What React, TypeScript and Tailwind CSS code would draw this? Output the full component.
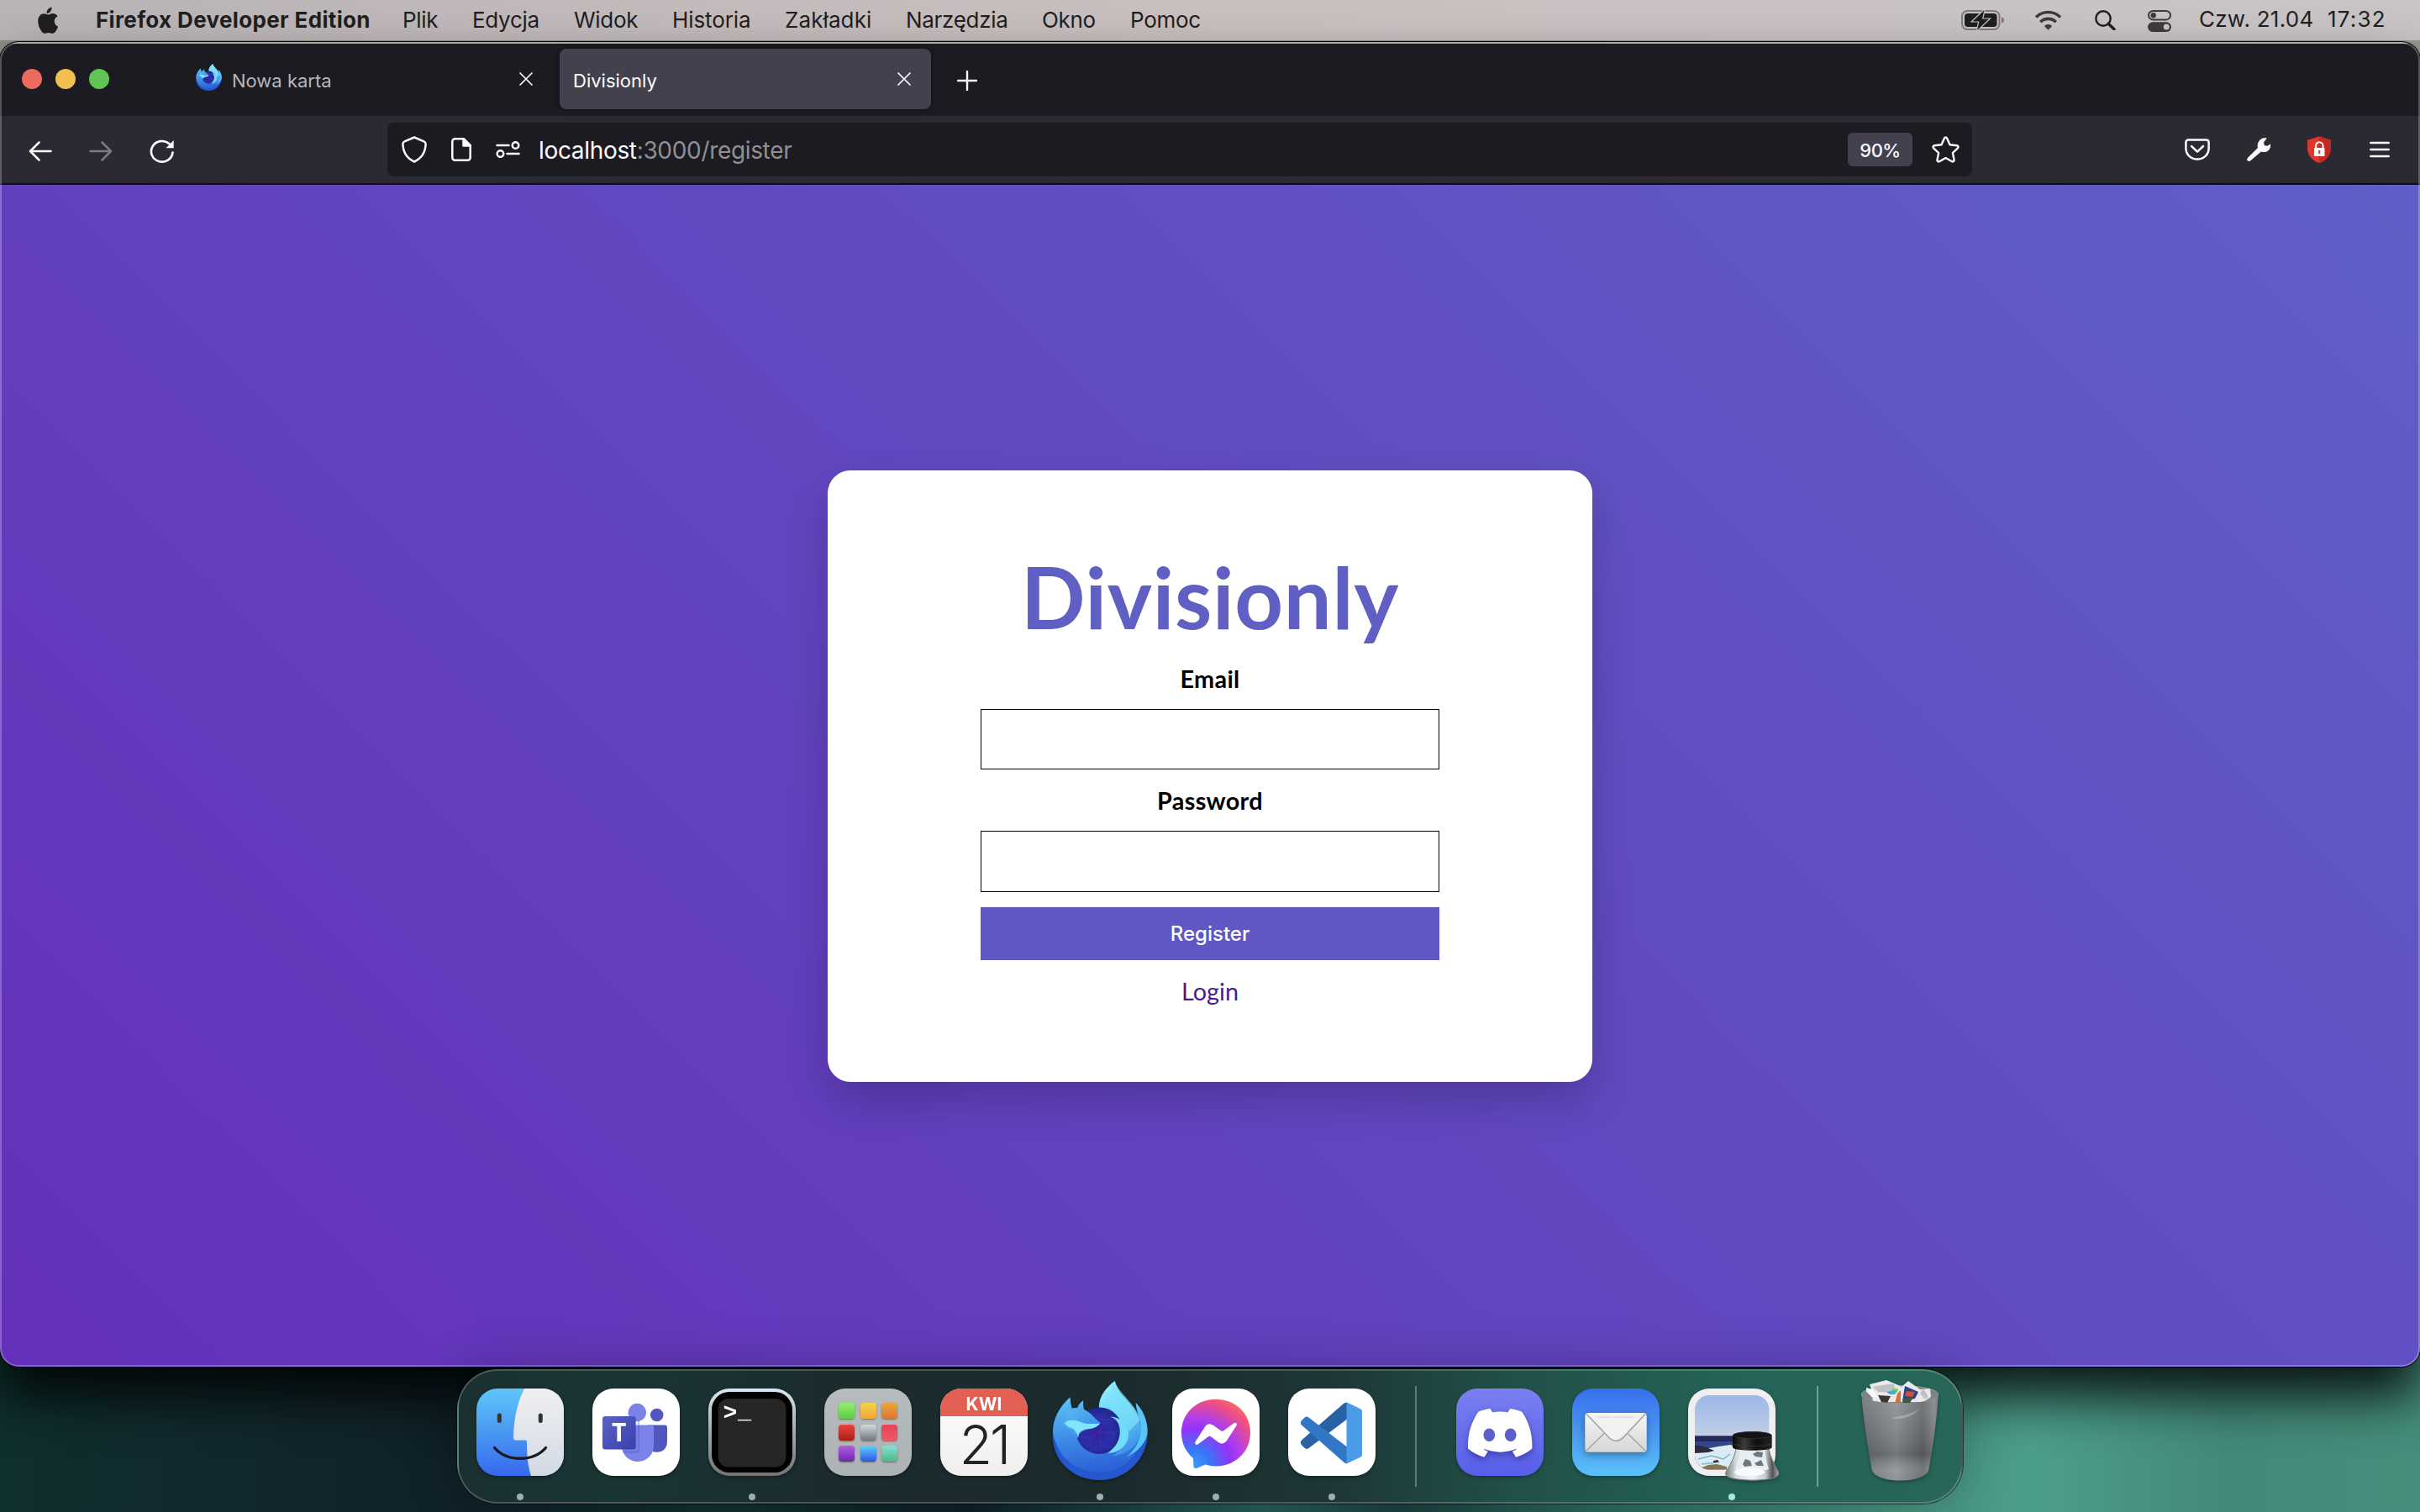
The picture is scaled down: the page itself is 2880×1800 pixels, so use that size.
import React from "react";

/* ---------- Menu bar ---------- */

function AppleLogo() {
  return (
    <svg className="h-8 w-[27px]" viewBox="0 0 27 32" fill="#1f1f1f">
      <path d="M18.5 0.5C18.8 2.6 17.9 4.6 16.8 5.9C15.7 7.2 14.1 8.1 12.6 8C12.3 6 13.3 4 14.4 2.8C15.5 1.5 17.2 0.6 18.5 0.5Z" />
      <path d="M25.6 11.3C22.8 13 21.6 15.1 21.7 17.6C21.8 20.6 23.4 22.6 26 23.7C25.4 25.6 24.4 27.6 23.1 29.4C22 30.9 20.8 31.8 19.3 31.8C17.7 31.8 16.9 30.9 14.8 30.9C12.7 30.9 11.7 31.8 10.2 31.8C8.6 31.8 7.4 30.6 6.2 28.9C3.9 25.9 2.2 21.2 2.2 17C2.2 11.2 5.8 8.2 9.4 8.2C11.3 8.2 12.9 9.5 14.4 9.5C15.8 9.5 17.6 8.1 19.9 8.1C21.6 8.1 24.2 8.9 25.6 11.3Z" />
    </svg>
  );
}

function BatteryIcon() {
  return (
    <svg className="h-6 w-[51px]" viewBox="0 0 51 24">
      <rect x="1" y="1" width="44.5" height="22" rx="6.5" fill="none" stroke="#7f797a" strokeWidth="2" />
      <path d="M48 8.2C50 9 51 10.4 51 12C51 13.6 50 15 48 15.8Z" fill="#7f797a" />
      <rect x="4" y="4" width="38.5" height="16" rx="3.8" fill="#1f1f1f" />
      <path d="M27.5 0L13.5 13.4H21.5L19 24L33 10.6H25Z" fill="#1f1f1f" stroke="#c9c1c2" strokeWidth="2.4" paintOrder="stroke" />
    </svg>
  );
}

function WifiIcon() {
  return (
    <svg className="h-6 w-[33px]" viewBox="0 0 33 24">
      <path d="M2 8.5A20.5 20.5 0 0 1 31 8.5" fill="none" stroke="#3d3b3c" strokeWidth="3.6" />
      <path d="M7.3 14.2A13 13 0 0 1 25.7 14.2" fill="none" stroke="#3d3b3c" strokeWidth="3.6" />
      <path d="M11.8 19A6.8 6.8 0 0 1 21.2 19L16.5 23.7Z" fill="#3d3b3c" />
    </svg>
  );
}

function SearchIcon() {
  return (
    <svg className="h-6 w-[25px]" viewBox="0 0 25 24" fill="none" stroke="#1f1f1f">
      <circle cx="10" cy="10" r="8.7" strokeWidth="2.4" />
      <path d="M16.2 16.2L23 22.8" strokeWidth="3.4" strokeLinecap="round" />
    </svg>
  );
}

function ControlIcon() {
  return (
    <svg className="h-[26px] w-7" viewBox="0 0 28 26">
      <rect x="1" y="1" width="26" height="10.4" rx="5.2" fill="none" stroke="#3d3b3c" strokeWidth="2" />
      <circle cx="6.7" cy="6.2" r="3.2" fill="#3d3b3c" />
      <rect x="0" y="14.2" width="28" height="11.8" rx="5.9" fill="#3d3b3c" />
      <circle cx="22.2" cy="20.1" r="3.5" fill="#cac3c4" />
    </svg>
  );
}

function MenuBar() {
  return (
    <header className="flex h-12 shrink-0 items-center justify-between bg-linear-to-r from-[#b9b3b6] via-[#cabfbf] to-[#c8c4c6] pr-[39px] pl-[43px] text-[26px] leading-none tracking-[-0.3px] whitespace-nowrap text-[#1f1f1f]">
      <nav className="flex items-center">
        <AppleLogo />
        <span className="ml-11 w-[325px] font-bold tracking-[0.35px]">Firefox Developer Edition</span>
        <span className="ml-10 w-[83px]">Plik</span>
        <span className="w-[121px]">Edycja</span>
        <span className="w-[117px]">Widok</span>
        <span className="w-[134px] tracking-[-0.1px]">Historia</span>
        <span className="w-[144px] tracking-[0.1px]">Zakładki</span>
        <span className="w-[162px]">Narzędzia</span>
        <span className="w-[105px]">Okno</span>
        <span>Pomoc</span>
      </nav>
      <div className="flex items-center">
        <BatteryIcon />
        <span className="ml-9 flex"><WifiIcon /></span>
        <span className="ml-[39px] flex"><SearchIcon /></span>
        <span className="ml-[38px] flex pt-0.5"><ControlIcon /></span>
        <span className="ml-[33px] w-[153px] pb-0.5 tracking-[0.25px]">Czw. 21.04</span>
        <span className="w-[71px] pb-0.5 tracking-[1.2px]">17:32</span>
      </div>
    </header>
  );
}

/* ---------- Browser ---------- */

function FirefoxLogo({ className, id }: { className: string; id: string }) {
  return (
    <svg className={className} viewBox="0 0 114 118">
      <defs>
        <linearGradient id={`${id}-body`} x1="0.3" y1="0" x2="0.5" y2="1">
          <stop offset="0" stopColor="#5cc0f5" />
          <stop offset="0.55" stopColor="#3c87e6" />
          <stop offset="1" stopColor="#2a5fd6" />
        </linearGradient>
        <linearGradient id={`${id}-snout`} gradientUnits="userSpaceOnUse" x1="20" y1="20" x2="50" y2="64">
          <stop offset="0" stopColor="#5cc0f5" />
          <stop offset="1" stopColor="#3c8be8" />
        </linearGradient>
        <linearGradient id={`${id}-flame`} x1="0.3" y1="0" x2="0.6" y2="1">
          <stop offset="0" stopColor="#9af0ff" />
          <stop offset="0.4" stopColor="#66d4fa" />
          <stop offset="1" stopColor="#3e8ee8" />
        </linearGradient>
        <radialGradient id={`${id}-globe`} cx="0.45" cy="0.55" r="0.6">
          <stop offset="0" stopColor="#36209a" />
          <stop offset="0.55" stopColor="#2a2ea6" />
          <stop offset="1" stopColor="#1f2280" />
        </radialGradient>
      </defs>
      <path d="M3 46C-2 66 1 88 16 102C27 113 42 118 57 118C89 118 114 92 114 61C114 47 108 34 99.7 26C103 38 104 48 101 58L60 66Z" fill="#2558d0" />
      <path d="M21.7 19.3C22 25 22.5 29 23.7 32.7C26 32 28.5 32 30 32.5C31 28.5 33.5 25.5 37.3 23.3C36.8 27.5 37.2 31 38.5 35L70 46L98 36C104 42 107 50 107 60C106 88 84 109 57 109C28 109 6 90 1 61C1 46 8 31 21.7 19.3Z" fill={`url(#${id}-body)`} />
      <path d="M99.7 26C100 34 103 40 105 48C108 66 101 81 88 91C104 83 114 72 113.5 58C113 46 108 34 99.7 26Z" fill="#58c6f4" />
      <path d="M74.7 0C77 12 87 20 95 30C102 39 106 50 105.5 60C104 76 90 88 72 89C82 85 88 72 86 60L68 34L55.7 31.7C56 18 64 8 74.7 0Z" fill={`url(#${id}-flame)`} />
      <path d="M74.7 0C69 9 67 19 69.5 29C72 40 82 48 92 60C99 52 104 48 104.500 46C101 28 80 16 74.7 0Z" fill="#7de2fb" opacity="0.7" />
      <circle cx="56.3" cy="59.3" r="27.8" fill={`url(#${id}-globe)`} />
      <g stroke="#5a4ae0" strokeWidth="0.5" opacity="0.5" fill="none">
        <path d="M52 46L66 34L76 46L62 52L56 60L74 62L82 56L76 46L52 46M56 60L46 68L34 66M46 68L58 74L74 62L70 80L58 74L46 84L46 68M62 52L52 46M58 74L56 60" />
      </g>
      <path d="M68.7 42.7C76 44 80 50 80.700 58C81.500 70 76 79 66 86C82 86 92 74 91 61C89.500 50 80 42 68.7 42.7Z" fill="#70dcf8" />
      <path d="M22 33C30 31 38 33 42 36C48 40 52 46 57.500 50C55 54 49 56 43 57.500C36 59 31 62 31.300 68C24 64 16 54 12 50Z" fill={`url(#${id}-snout)`} />
      <path d="M14.7 50C20 45 28 46 34 49C40 51.500 49 51.500 57 50.500C55 54 50 57 43 57C36 57.500 31 61 31.3 66.500C29.500 62 27 58 24 56.500C20 55.500 17 53.500 14.7 50Z" fill="#7fe6fb" />
    </svg>
  );
}

function CloseIcon() {
  return (
    <svg className="size-4" viewBox="0 0 16 16" stroke="#fbfbfe" strokeWidth="1.7" strokeLinecap="round">
      <path d="M1 1L15 15M15 1L1 15" />
    </svg>
  );
}

function TabStrip() {
  return (
    <div className="flex h-[86px] shrink-0 items-start bg-[#1c1b22] text-[22px] leading-none whitespace-nowrap">
      <div className="mt-[30px] ml-[26px] flex gap-4">
        <span className="size-6 rounded-full bg-[#ec6a5e]" />
        <span className="size-6 rounded-full bg-[#f4bf4f]" />
        <span className="size-6 rounded-full bg-[#61c554]" />
      </div>
      <div className="mt-1.5 ml-[83px] flex h-[72px] w-[453px] items-center pl-5">
        <span className="-mt-1 flex"><FirefoxLogo className="h-8 w-[31px]" id="tab-fx" /></span>
        <span className="ml-3 grow pt-[3px] text-[#b6b6ba]">Nowa karta</span>
        <span className="mr-8 flex"><CloseIcon /></span>
      </div>
      <div className="mt-1.5 flex h-[72px] w-[442px] items-center rounded-lg bg-[#42414d] px-6 pl-4 shadow-[0_0_6px_rgba(0,0,0,0.5)]">
        <span className="grow pt-[3px] text-[#fbfbfe]">Divisionly</span>
        <span className="flex"><CloseIcon /></span>
      </div>
      <svg className="mt-8 ml-[31px] size-6" viewBox="0 0 24 24" stroke="#fbfbfe" strokeWidth="2.4" strokeLinecap="round">
        <path d="M12 1V23M1 12H23" />
      </svg>
    </div>
  );
}

function AddressBar() {
  return (
    <div className="flex h-16 w-[1886px] items-center rounded-lg bg-[#1c1b22] pl-[17px] text-[28px] leading-none whitespace-nowrap">
      <svg className="h-8 w-[30px]" viewBox="0 0 30 32" fill="none" stroke="#fbfbfe" strokeWidth="2.5" strokeLinejoin="round">
        <path d="M15 1.5L26.5 6.3C28 7 28.7 8 28.6 9.5C28.3 19 23.5 26.5 15 30.5C6.5 26.5 1.7 19 1.4 9.5C1.3 8 2 7 3.5 6.3Z" />
      </svg>
      <svg className="ml-[29px] h-7 w-6" viewBox="0 0 24 28" fill="none" stroke="#fbfbfe" strokeWidth="2.5" strokeLinejoin="round">
        <path d="M4.5 1.3H15L22.7 9V23.5A3.2 3.2 0 0 1 19.5 26.7H4.5A3.2 3.2 0 0 1 1.3 23.5V4.5A3.2 3.2 0 0 1 4.5 1.3Z" />
        <path d="M14.5 1.3V9.5H22.7Z" fill="#fbfbfe" />
      </svg>
      <svg className="ml-[29px] h-5 w-[29px]" viewBox="0 0 29 20" fill="none" stroke="#fbfbfe" strokeWidth="2.5" strokeLinecap="round">
        <circle cx="23.5" cy="5" r="3.8" />
        <circle cx="5.5" cy="15" r="3.8" />
        <path d="M1.5 5H15.5M13.5 15H27.5" />
      </svg>
      <span className="ml-[22px] grow pt-0.5 tracking-[-0.33px] text-[#8f8f95]">
        <span className="text-[#fbfbfe]">localhost</span>:3000/register
      </span>
      <span className="flex h-10 w-[77px] items-center justify-center rounded-md bg-[#42414d] pt-0.5 text-[22px] font-medium tracking-[-0.5px] text-[#fbfbfe]">90%</span>
      <svg className="mr-[15px] ml-[23px] h-8 w-[33px]" viewBox="0 0 33 32" fill="none" stroke="#fbfbfe" strokeWidth="2.4" strokeLinejoin="round">
        <path d="M15 2.5C15.6 1.1 17.4 1.1 18 2.5L21.5 10.2L29.8 11.2C31.4 11.4 32 13.2 30.9 14.3L24.9 20L26.5 28.3C26.8 29.8 25.3 30.9 24 30.2L16.5 26L9 30.2C7.7 30.9 6.2 29.8 6.5 28.3L8.1 20L2.1 14.3C1 13.2 1.6 11.4 3.2 11.2L11.5 10.2Z" />
      </svg>
    </div>
  );
}

function Toolbar() {
  return (
    <div className="flex h-[82px] shrink-0 items-start border-b-2 border-[#0c0c0d] bg-[#2b2a33] pt-2 pr-9 pl-[34px]">
      <div className="flex h-16 items-center pt-1">
        <svg className="h-6 w-7" viewBox="0 0 28 24" fill="none" stroke="#fbfbfe" strokeWidth="2.5" strokeLinecap="round" strokeLinejoin="round">
          <path d="M26.5 12H2M12.5 1.5L2 12L12.5 22.5" />
        </svg>
        <svg className="ml-11 h-6 w-7" viewBox="0 0 28 24" fill="none" stroke="#7c7b82" strokeWidth="2.5" strokeLinecap="round" strokeLinejoin="round">
          <path d="M1.5 12H26M15.5 1.5L26 12L15.5 22.5" />
        </svg>
        <svg className="ml-11 h-7 w-[30px]" viewBox="0 0 30 28" fill="none" stroke="#fbfbfe" strokeWidth="2.6" strokeLinecap="round">
          <path d="M27.5 15.5A12.8 12.3 0 1 1 23.5 5.3" />
          <path d="M28.7 1V10.2H19.5Z" fill="#fbfbfe" stroke="none" />
        </svg>
      </div>
      <div className="ml-[253px]"><AddressBar /></div>
      <div className="ml-auto flex h-16 items-center">
        <svg className="h-[26px] w-[30px]" viewBox="0 0 30 26" fill="none" stroke="#fbfbfe" strokeWidth="2.5" strokeLinecap="round" strokeLinejoin="round">
          <path d="M4.5 1.4H25.5A3 3 0 0 1 28.6 4.4V11.5C28.6 19 22.5 24.6 15 24.6S1.4 19 1.4 11.5V4.4A3 3 0 0 1 4.5 1.4Z" />
          <path d="M8 9L15 15.7L22 9" />
        </svg>
        <svg className="ml-11 h-7 w-[29px]" viewBox="0 0 29 28" fill="#fbfbfe">
          <path d="M28 7.5C29 12.5 25.5 17 20.5 17C19 17 18 16.8 17 16.4L4.3 27.3C3.2 28.2 1.7 28.1 0.8 27.2C-0.1 26.2 0 24.8 1 23.8L13 12C11.5 6 15.5 0.6 21 0.3C22 0.2 23 0.3 23.8 0.6L20 5.5L20.8 9L24.3 9.7Z" />
        </svg>
        <svg className="ml-[42px] h-8 w-[30px]" viewBox="0 0 30 32">
          <path d="M15 0.5L29 4.8V14C29 23 23 29.5 15 32C7 29.5 1 23 1 14V4.8Z" fill="#e03629" />
          <path d="M15 0.5L29 4.8V14C29 23 23 29.5 15 32Z" fill="#c22a20" />
          <rect x="9" y="14" width="12.5" height="10" rx="1" fill="#fff" />
          <path d="M11 14.5V11.5A4.2 4.2 0 0 1 19.500 11.5V14.5" fill="none" stroke="#fff" strokeWidth="2" />
          <path d="M15.2 17V21" stroke="#d23226" strokeWidth="2" />
        </svg>
        <svg className="ml-[45px] h-5 w-6" viewBox="0 0 24 20" stroke="#fbfbfe" strokeWidth="2.5" strokeLinecap="round">
          <path d="M1.3 2H22.7M1.3 10H22.7M1.3 18H22.7" />
        </svg>
      </div>
    </div>
  );
}

function RegisterPage() {
  return (
    <main className="flex min-h-0 grow items-center justify-center bg-[linear-gradient(45deg,#6430ba,#5f5fc8)] pb-0.5 font-['Lato',sans-serif]">
      <form className="mt-[3px] flex h-[728px] w-[910px] flex-col items-center rounded-[27px] bg-white px-[182px] pt-[90px] text-[28.8px] leading-none text-black shadow-[0_22px_50px_rgba(0,0,0,0.2)]">
        <h1 className="text-[100.8px] leading-[121px] font-bold tracking-[0.7px] text-[#5f5fc4]">Divisionly</h1>
        <label className="mt-5 h-[35px] leading-[35px] font-bold tracking-[0.3px]">Email</label>
        <div className="mt-[18px] h-[72px] w-full border border-black bg-white" />
        <label className="mt-5 h-[35px] leading-[35px] font-bold tracking-[0.3px]">Password</label>
        <div className="mt-[18px] h-[73px] w-full border border-black bg-white" />
        <button type="button" className="mt-[18px] flex h-[63px] w-full items-center justify-center bg-[#5f57c4] font-['Inter',sans-serif] text-[24px] font-medium text-white">Register</button>
        <a className="mt-5 h-[35px] leading-[35px] text-[#4b1a8b]">Login</a>
      </form>
    </main>
  );
}

function BrowserWindow() {
  return (
    <section className="relative mt-0.5 flex h-[1577px] shrink-0 flex-col overflow-hidden rounded-[22px] pt-0.5 shadow-[0_0_0_1px_#050505,0_36px_60px_rgba(0,0,0,0.85)]">
      <TabStrip />
      <Toolbar />
      <RegisterPage />
      <div className="pointer-events-none absolute inset-0 rounded-[22px] border-2 border-white/25" />
    </section>
  );
}

/* ---------- Dock ---------- */

function FinderIcon() {
  return (
    <svg className="size-[104px]" viewBox="0 0 104 104">
      <defs>
        <linearGradient id="fd-b" x1="0" y1="0" x2="0" y2="1"><stop offset="0" stopColor="#5fc7f8" /><stop offset="1" stopColor="#3569ec" /></linearGradient>
        <linearGradient id="fd-w" x1="0" y1="0" x2="0" y2="1"><stop offset="0" stopColor="#f0f0f2" /><stop offset="1" stopColor="#d2d9e4" /></linearGradient>
        <clipPath id="fd-c"><rect width="104" height="104" rx="25" /></clipPath>
      </defs>
      <g clipPath="url(#fd-c)">
        <rect width="104" height="104" fill="url(#fd-b)" />
        <path d="M57 0C48 18 44.500 38 44 58C44 60.500 45 61.500 47 61.500H57.500C59.500 61.500 60 62 60 64C60 80 61.500 93 65 104H104V0Z" fill="url(#fd-w)" />
      </g>
      <path d="M27.3 32V38.500M76.3 32V38.500" stroke="#333" strokeWidth="5" strokeLinecap="round" />
      <path d="M21.5 70.5C36 87.500 68 87.500 82.5 70.5" fill="none" stroke="#1b1b1f" strokeWidth="3.4" strokeLinecap="round" />
    </svg>
  );
}

function TeamsIcon() {
  return (
    <svg className="size-[104px]" viewBox="0 0 104 104">
      <defs>
        <linearGradient id="tm-t" x1="0" y1="0" x2="1" y2="1"><stop offset="0" stopColor="#5a62c8" /><stop offset="1" stopColor="#3a40ab" /></linearGradient>
      </defs>
      <rect width="104" height="104" rx="25" fill="#fff" />
      <circle cx="76.7" cy="31.5" r="7.8" fill="#5058c0" />
      <path d="M66 43.5H86A3 3 0 0 1 89 46.5V63C89 71 84 75.8 77 75.8C72 75.8 69 74 66 70Z" fill="#5058c0" />
      <circle cx="53.3" cy="28.5" r="10.7" fill="#7b83eb" />
      <path d="M40 43.5H70A3 3 0 0 1 73 46.5V67.5C73 79 64.5 87 54 87C43.5 87 35 79 34.7 68Z" fill="#7b83eb" />
      <path d="M36 74H51A3 3 0 0 0 54 71V38H56V73A4 4 0 0 1 52 77H37Z" fill="#4e55b8" opacity="0.35" />
      <rect x="12" y="33" width="39.7" height="39.4" rx="3" fill="url(#tm-t)" />
      <text x="31.8" y="62.5" textAnchor="middle" fontFamily="Open Sans" fontWeight="700" fontSize="30" fill="#fff">T</text>
    </svg>
  );
}

function TerminalIcon() {
  return (
    <svg className="size-[104px]" viewBox="0 0 104 104">
      <defs>
        <linearGradient id="te-r" x1="0" y1="0" x2="0" y2="1"><stop offset="0" stopColor="#d8e8f2" /><stop offset="0.5" stopColor="#9fa8ad" /><stop offset="1" stopColor="#77736f" /></linearGradient>
      </defs>
      <rect width="104" height="104" rx="25" fill="url(#te-r)" />
      <rect x="4" y="4" width="96" height="96" rx="21" fill="#000" />
      <rect x="11.6" y="12" width="80.8" height="81.5" rx="12" fill="#262626" />
      <text x="17.5" y="37" fontFamily="Liberation Mono" fontWeight="700" fontSize="28" fill="#fff">&gt;</text>
      <text x="35" y="35" fontFamily="Liberation Mono" fontWeight="700" fontSize="27" fill="#fff">_</text>
    </svg>
  );
}

const tiles = [
  ["#93f06d", "#5ccc45"], ["#f8d24a", "#f0a53c"], ["#eda63b", "#dd7433"],
  ["#e5493a", "#a51e18"], ["#cfdae0", "#74777a"], ["#e9415a", "#ee5967"],
  ["#b45be0", "#6b2bab"], ["#5fd2fb", "#2a55e6"], ["#86e0d5", "#50b585"],
];

function LaunchpadIcon() {
  return (
    <div className="grid size-[104px] grid-cols-[repeat(3,19px)] content-center justify-center gap-[6.5px] rounded-[25px] bg-linear-to-b from-[#b6bcbe] to-[#adb3b4]">
      {tiles.map(([a, b]) => (
        <span key={a} className="size-[19px] rounded-[4px] shadow-[0_1px_2px_rgba(0,0,0,0.4)]" style={{ background: `linear-gradient(${a}, ${b})` }} />
      ))}
    </div>
  );
}

function CalendarIcon() {
  return (
    <div className="flex size-[104px] flex-col items-center overflow-hidden rounded-[25px] bg-linear-to-b from-white to-[#f1efed]">
      <div className="flex h-[33px] w-full items-center justify-center bg-[#e25f54] pt-[3px] text-[21px] leading-none font-bold text-white">KWI</div>
      <div className="mt-px text-[64px] leading-[65px] font-light tracking-[-3px] text-[#222]">21</div>
    </div>
  );
}

function MessengerIcon() {
  return (
    <svg className="size-[104px]" viewBox="0 0 104 104">
      <defs>
        <radialGradient id="ms-g" gradientUnits="userSpaceOnUse" cx="26" cy="92" r="92">
          <stop offset="0" stopColor="#3d9cf8" /><stop offset="0.2" stopColor="#3579f7" /><stop offset="0.48" stopColor="#9433f8" /><stop offset="0.62" stopColor="#b13ee8" /><stop offset="0.85" stopColor="#f04e84" /><stop offset="1" stopColor="#f3765c" />
        </radialGradient>
      </defs>
      <rect width="104" height="104" rx="25" fill="#fff" />
      <path d="M52 12.8C75 12.8 93 29.5 93 52.5S75 92.4 52 92.4C48 92.4 43.5 91.8 39.5 90.5L29.5 94.7C27 95.6 25.5 94.5 25.4 92.5L25 83C16 75.5 11 65 11 52.5C11 29.5 29 12.8 52 12.8Z" fill="url(#ms-g)" />
      <path d="M27.5 63.5L39 45.5C41.5 41.7 45.5 41.2 49 43.7L58 50.3C59 51 60 51 61 50.3L73.5 41.2C75.5 39.8 78 41.8 76.6 44L65 62C62.5 65.8 58.5 66.5 55 63.9L46 57.2C45 56.5 44 56.5 43 57.2L30.5 66.5C28.5 67.8 26 65.7 27.5 63.5Z" fill="#fff" />
    </svg>
  );
}

function CodeIcon() {
  return (
    <svg className="size-[104px]" viewBox="0 0 104 104">
      <rect width="104" height="104" rx="25" fill="#fff" />
      <path d="M66.5 17.5L16 61.5C14.5 63 14.5 65.5 16 67.2L19.5 70.8C21 72.2 22.8 72.3 24.5 71L70 36.5V16.5Z" fill="#2862a5" />
      <path d="M16 38L19.5 34.8C21 33.3 22.8 33.2 24.5 34.5L70 69.5V89.2C68.5 89.2 67.5 88.9 66.5 88L16 43.5C14.5 42 14.5 39.7 16 38Z" fill="#3277c6" />
      <path d="M69.5 16.2L86 24.2C87.5 25 88 26 88 27.5V78.5C88 80 87.5 81 86 81.7L69.5 89.5Z" fill="#4b9be9" />
    </svg>
  );
}

function DiscordIcon() {
  return (
    <svg className="size-[104px]" viewBox="0 0 104 104">
      <defs>
        <linearGradient id="dc-g" x1="0" y1="0" x2="0" y2="1"><stop offset="0" stopColor="#7a80ef" /><stop offset="1" stopColor="#575fea" /></linearGradient>
      </defs>
      <rect width="104" height="104" rx="25" fill="url(#dc-g)" />
      <path className="drop-shadow-[0_4px_4px_rgba(30,30,120,0.5)]" d="M26 28C30 26 35 24.6 40.5 24L43 28.2C49 27.3 55.5 27.3 61.5 28.2L64 24C69.5 24.6 74 26 78.5 28C87 41 91 55 90.3 71.5C84.5 76.5 78 79.8 71 81.7L66.8 74.8C69 74 71 73 72.5 71.5C59 77 46 77 32 71.5C33.5 73 35.5 74 37.7 74.8L33.5 81.7C26.5 79.8 20 76.5 14 71.5C13.5 55 17.5 41 26 28Z" fill="#fff" />
      <ellipse cx="39.3" cy="55.3" rx="6.9" ry="7.7" fill="#5a5fc9" />
      <ellipse cx="64.7" cy="55.3" rx="6.9" ry="7.7" fill="#5a5fc9" />
    </svg>
  );
}

function MailIcon() {
  return (
    <svg className="size-[104px]" viewBox="0 0 104 104">
      <defs>
        <linearGradient id="ml-g" x1="0" y1="0" x2="0" y2="1"><stop offset="0" stopColor="#376fec" /><stop offset="1" stopColor="#5bc1f9" /></linearGradient>
        <linearGradient id="ml-e" x1="0" y1="0" x2="0" y2="1"><stop offset="0" stopColor="#f6f6f6" /><stop offset="1" stopColor="#d6d6d6" /></linearGradient>
      </defs>
      <rect width="104" height="104" rx="25" fill="url(#ml-g)" />
      <rect className="drop-shadow-[0_3px_4px_rgba(0,0,0,0.35)]" x="15.3" y="29" width="73.4" height="46.7" rx="4" fill="url(#ml-e)" />
      <path d="M17 74L38 53.5M87 74L66 53.5" stroke="#a5a5a5" strokeWidth="1.5" />
      <path d="M17 30.5L44 58.5C49 63.5 55.5 63.5 60.5 58.5L87 30.5Z" fill="#f1f1f1" />
      <path d="M17 30.5L44 58.5C49 63.5 55.5 63.5 60.5 58.5L87 30.5" fill="none" stroke="#a9a9a9" strokeWidth="1.8" />
      <path d="M30 34.2H47M50 34.2H74" stroke="#d0d0d0" strokeWidth="1.2" strokeDasharray="2 0.7" />
    </svg>
  );
}

function PreviewIcon() {
  return (
    <svg className="size-[104px] overflow-visible" viewBox="0 0 104 104">
      <defs>
        <linearGradient id="pv-s" x1="0" y1="0" x2="0" y2="1"><stop offset="0" stopColor="#9cb7e9" /><stop offset="1" stopColor="#c2cfe6" /></linearGradient>
        <linearGradient id="pv-c" x1="0" y1="0" x2="1" y2="0"><stop offset="0" stopColor="#050505" /><stop offset="0.3" stopColor="#3c3c3c" /><stop offset="0.6" stopColor="#0e0e0e" /><stop offset="1" stopColor="#222" /></linearGradient>
        <linearGradient id="pv-j" x1="0" y1="0" x2="1" y2="0"><stop offset="0" stopColor="#777d7e" /><stop offset="0.2" stopColor="#d9dddd" /><stop offset="0.5" stopColor="#eef2f4" /><stop offset="0.75" stopColor="#c8cccc" /><stop offset="0.88" stopColor="#4f5355" /><stop offset="1" stopColor="#a8acac" /></linearGradient>
        <clipPath id="pv-k"><rect x="8" y="8" width="88.4" height="88.6" rx="17" /></clipPath>
      </defs>
      <rect width="104" height="104" rx="25" fill="#efefef" />
      <g clipPath="url(#pv-k)">
        <rect x="8" y="8" width="89" height="49" fill="url(#pv-s)" />
        <rect x="8" y="56.3" width="89" height="13" fill="#27275f" />
        <rect x="8" y="63" width="89" height="34" fill="#33478a" />
        <path d="M8 76L20 72L36 69L50 67L60 70V97H8Z" fill="#dcecf5" />
        <path d="M8 68C13 67 18 69 24 71L31 74L24 76L8 77Z" fill="#2b2d3e" />
        <path d="M12 84L28 80L42 84L50 78M16 90L34 88" stroke="#7fb4cf" strokeWidth="1.5" fill="none" />
        <path d="M30 86L35 85L37 88H30Z" fill="#3b3328" />
        <path d="M14 95L24 91L34 90L46 93V98H14Z" fill="#8a7657" />
      </g>
      <path d="M57 72H96C98 82 103 91 107.5 99C109 103 106 105 102 106.5C88 110 66 110 51 106.5C46 105 43.5 103 45 99C50 91 55 82 57 72Z" fill="url(#pv-j)" stroke="#7b8183" strokeWidth="1" />
      <path d="M62 73H91C92 82 94 90 96 96C85 100 67 100 56 96C59 90 61 82 62 73Z" fill="#e6eef3" />
      <ellipse cx="73" cy="99.5" rx="18" ry="5" fill="#fafafa" />
      <path d="M77 78L82 75L89 76L88 82L80 81ZM65 90L68 84L74 86L76 92L67 93ZM79 89L87 85L90 92L82 92Z" fill="#6f767c" />
      <path d="M53 56C53 49.5 99.7 49.5 99.7 56V70C99 75 54 75 53 70Z" fill="url(#pv-c)" />
      <ellipse cx="76.3" cy="55.5" rx="22.5" ry="4" fill="#131313" stroke="#333" strokeWidth="0.7" />
      <path d="M54 66C66 69.5 87 69.5 99 66" stroke="#3a3a3a" strokeWidth="0.8" fill="none" />
    </svg>
  );
}

function TrashIcon() {
  return (
    <svg className="h-[120px] w-[92px]" viewBox="0 0 92 120">
      <defs>
        <linearGradient id="tr-g" x1="0" y1="0" x2="1" y2="0"><stop offset="0" stopColor="#6d7275" /><stop offset="0.15" stopColor="#74797b" /><stop offset="0.45" stopColor="#8b9092" /><stop offset="0.8" stopColor="#66696b" /><stop offset="0.95" stopColor="#84888a" /><stop offset="1" stopColor="#6c7072" /></linearGradient>
        <linearGradient id="tr-s" x1="0" y1="0" x2="0" y2="1"><stop offset="0" stopColor="#fff" stopOpacity="0.1" /><stop offset="0.7" stopColor="#000" stopOpacity="0.18" /><stop offset="0.88" stopColor="#fff" stopOpacity="0.1" /><stop offset="1" stopColor="#fff" stopOpacity="0.05" /></linearGradient>
      </defs>
      <ellipse cx="46" cy="17" rx="45.7" ry="10.5" fill="#7c8486" stroke="#9fa6a8" strokeWidth="0.8" />
      <path d="M6 9L12 11L10 5L30 0L42 5L48 8L56 1L70 11L82 10L83 20L74 26H14L13 20L6 14Z" fill="#e9e9ea" />
      <path d="M14 8L38 4L43 15L20 14ZM74 10L80 20L76 23L70 16Z" fill="#bfc1c3" />
      <path d="M6 9L12 20L20 21L15 12ZM38 26L46 12L48 26Z" fill="#f7f7f7" />
      <path d="M30 14L44 11L40 17L34 17Z" fill="#35aee4" />
      <path d="M36 11L44 10L43 14L38 13Z" fill="#74cf3f" />
      <path d="M20 18L35 19L31 27L24 26Z" fill="#3f3431" />
      <path d="M43 16L47 12V26L40 27Z" fill="#d9733b" />
      <path d="M52 7L68 14L64 22L49 25Z" fill="#2c3f93" />
      <path d="M54 13L64 14L61 20L52 19Z" fill="#d1522c" />
      <path d="M50 22L62 20L58 27L49 27Z" fill="#3c5a3c" />
      <path d="M0.3 18C5 30.5 87 30.5 91.7 18C90 50 85 80 80.5 106C79 114 66 119.5 46.5 119.5C27 119.5 14 114 12.5 106C8 80 3 50 0.3 18Z" fill="url(#tr-g)" />
      <path d="M0.3 18C5 30.5 87 30.5 91.7 18C90 50 85 80 80.5 106C79 114 66 119.5 46.5 119.5C27 119.5 14 114 12.5 106C8 80 3 50 0.3 18Z" fill="url(#tr-s)" />
      <path d="M36 45C46 48 64 44 71 31C66 40 50 42 36 45Z" fill="#c3c7c9" opacity="0.5" />
    </svg>
  );
}

function DockItem({ children, running, light }: { children: React.ReactNode; running?: boolean; light?: boolean }) {
  return (
    <div className="flex w-[104px] flex-col items-center">
      <div className="flex h-[104px] w-[104px] items-center justify-center drop-shadow-[0_2px_2px_rgba(0,0,0,0.3)]">{children}</div>
      {running && <span className={light ? "mt-[21px] size-2 rounded-full bg-[#a5ecdf]" : "mt-[21px] size-2 rounded-full bg-[#9ab0b1]"} />}
    </div>
  );
}

function Dock() {
  return (
    <footer className="relative mx-auto mt-[3px] flex h-[160px] w-[1792px] shrink-0 items-start rounded-[48px] border-2 border-white/20 bg-[linear-gradient(90deg,#1a3030_0%,#1a3535_10%,#1b2b2e_25%,#1c2b2d_45%,#1e3636_58%,#205047_70%,#256257_85%,#276658_100%)] pt-[21px] pl-[21px] shadow-[0_0_0_1px_rgba(0,0,0,0.55),0_0_60px_rgba(0,0,0,0.25)]">
      <div className="flex gap-[34px]">
        <DockItem running><FinderIcon /></DockItem>
        <DockItem><TeamsIcon /></DockItem>
        <DockItem running><TerminalIcon /></DockItem>
        <DockItem><LaunchpadIcon /></DockItem>
        <DockItem><CalendarIcon /></DockItem>
        <DockItem running><FirefoxLogo className="mb-1 h-[118px] w-[114px] shrink-0" id="dock-fx" /></DockItem>
        <DockItem running><MessengerIcon /></DockItem>
        <DockItem running><CodeIcon /></DockItem>
      </div>
      <span className="mt-[-3px] ml-[47px] h-[120px] w-0.5 bg-[#5f7f7f]" />
      <div className="ml-[47px] flex gap-[34px]">
        <DockItem><DiscordIcon /></DockItem>
        <DockItem><MailIcon /></DockItem>
        <DockItem running light><PreviewIcon /></DockItem>
      </div>
      <span className="mt-[-3px] ml-[49px] h-[120px] w-0.5 bg-[#66a597]" />
      <span className="mt-[-10px] ml-[51px] flex drop-shadow-[0_2px_2px_rgba(0,0,0,0.3)]"><TrashIcon /></span>
    </footer>
  );
}

export default function App() {
  return (
    <div className="flex h-[1800px] w-[2880px] flex-col overflow-hidden bg-[linear-gradient(90deg,#8f8b89,#9a9694),linear-gradient(90deg,#0f2f2e_0%,#11292d_8%,#0f2027_20%,#123030_30%,#0f2027_40%,#255f59_52%,#1c4040_58%,#2b6a60_66%,#45927f_78%,#4c9e8c_84%,#43897a_92%,#458e7c_100%)] bg-[length:100%_80px,100%_100%] bg-no-repeat font-['Inter',sans-serif]">
      <MenuBar />
      <BrowserWindow />
      <Dock />
    </div>
  );
}
